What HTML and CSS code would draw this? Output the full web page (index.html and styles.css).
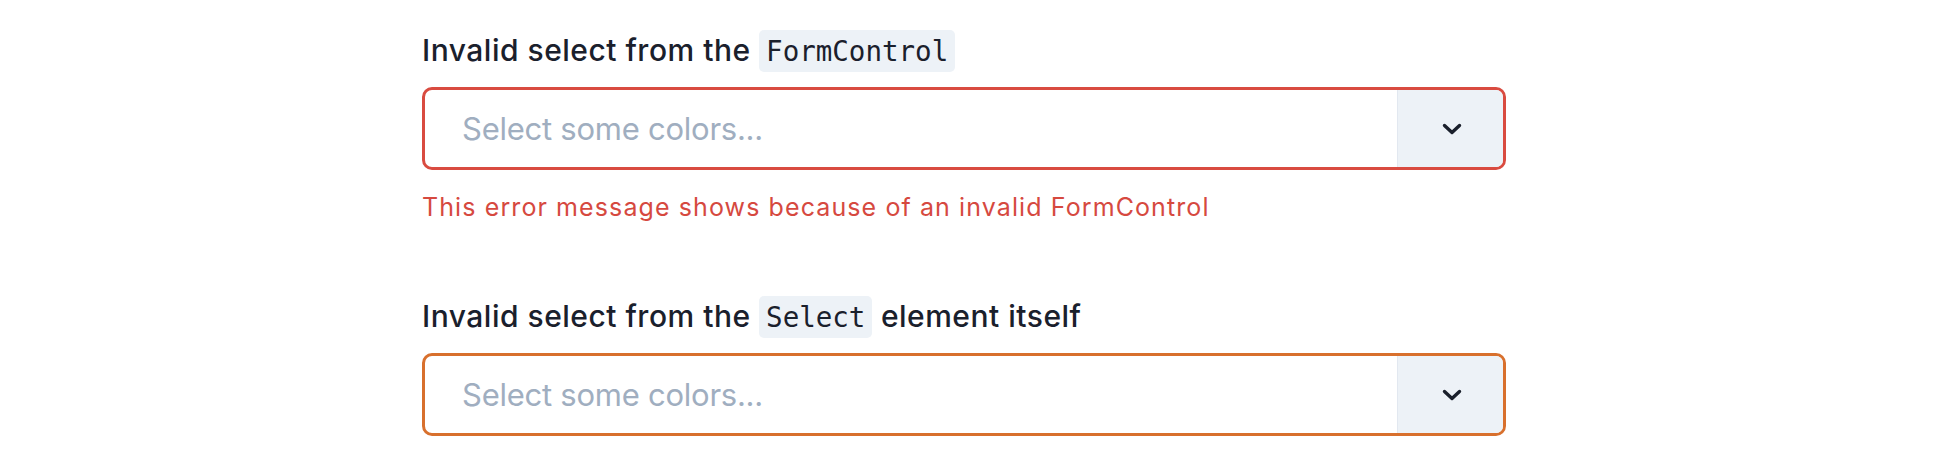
FILE: index.html
```html
<!DOCTYPE html>
<html lang="en">
<head>
<meta charset="utf-8">
<title>Invalid selects</title>
<link rel="stylesheet" href="styles.css">
</head>
<body>
<main class="stack">
  <section class="field">
    <label class="label">Invalid select from the <code class="code">FormControl</code></label>
    <div class="select select-error">
      <div class="value">Select some colors...</div>
      <div class="toggle">
        <svg class="chev" width="20" height="12" viewBox="0 0 20 12"><polyline points="2.5,2.5 10,9.5 17.5,2.5" fill="none" stroke="#1a202c" stroke-width="3.4" stroke-linecap="round" stroke-linejoin="round"/></svg>
      </div>
    </div>
    <p class="error">This error message shows because of an invalid FormControl</p>
  </section>
  <section class="field">
    <label class="label">Invalid select from the <code class="code">Select</code> element itself</label>
    <div class="select select-warn">
      <div class="value">Select some colors...</div>
      <div class="toggle">
        <svg class="chev" width="20" height="12" viewBox="0 0 20 12"><polyline points="2.5,2.5 10,9.5 17.5,2.5" fill="none" stroke="#1a202c" stroke-width="3.4" stroke-linecap="round" stroke-linejoin="round"/></svg>
      </div>
    </div>
  </section>
</main>
</body>
</html>
```

FILE: styles.css
```css
html, body {
  margin: 0;
  padding: 0;
  background: #ffffff;
}

body {
  font-family: Inter, Roboto, "Noto Sans", sans-serif;
  color: #1a202c;
}

.stack {
  width: 1084px;
  margin-left: 422px;
  padding-top: 29px;
  display: flex;
  flex-direction: column;
  gap: 69px;
}

.field {
  display: flex;
  flex-direction: column;
}

.label {
  display: block;
  font-size: 30px;
  font-weight: 500;
  line-height: 42px;
  letter-spacing: 0.5px;
  margin-bottom: 15px;
  white-space: nowrap;
}

.code {
  font-family: "DejaVu Sans Mono", "Liberation Mono", monospace;
  font-size: 27.5px;
  font-weight: 400;
  letter-spacing: 0;
  background: #edf2f7;
  border-radius: 5px;
  padding: 5px 7px 5px;
}

.select {
  box-sizing: border-box;
  height: 83px;
  border: 3px solid #d94b40;
  border-radius: 10px;
  display: flex;
  overflow: hidden;
  background: #ffffff;
}

.select-error {
  border-color: #d94b40;
}

.select-warn {
  border-color: #d8702d;
}

.value {
  flex: 1;
  display: flex;
  align-items: center;
  padding-left: 37px;
  font-size: 31px;
  letter-spacing: -0.25px;
  color: #a0aec0;
}

.toggle {
  width: 105px;
  background: #edf2f7;
  border-left: 1px solid #e2e8f0;
  display: flex;
  align-items: center;
  justify-content: center;
}

.chev {
  display: block;
  margin-left: 2px;
}

.error {
  margin: 19px 0 0;
  font-size: 25px;
  line-height: 37px;
  letter-spacing: 1.1px;
  color: #d6493f;
}
```
